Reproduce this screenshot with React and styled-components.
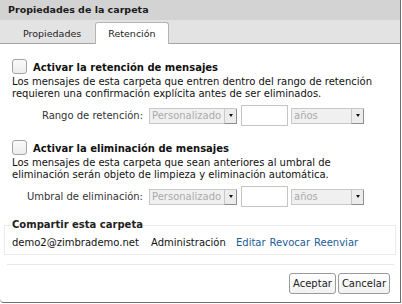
import React from 'react';
import styled, { createGlobalStyle } from 'styled-components';

const GlobalStyle = createGlobalStyle`
  html, body {
    margin: 0;
    padding: 0;
    background: #fff;
  }
  body {
    font-family: "DejaVu Sans", Verdana, sans-serif;
    font-size: 10px;
    color: #111;
  }
`;

const Dialog = styled.div`
  width: 400px;
  height: 302px;
  display: flex;
  flex-direction: column;
  background: #fff;
  border-right: 1px solid #6f6f6f;
  border-bottom: 1px solid #6f6f6f;
  border-bottom-left-radius: 4px;
  overflow: hidden;
`;

const TitleBar = styled.div`
  height: 20px;
  background: #d3d3d3;
  padding: 0 0 2px 8px;
  box-sizing: border-box;
  display: flex;
  align-items: center;
  font-weight: bold;
  font-size: 9.5px;
  color: #1a1a1a;
`;

const TabBar = styled.div`
  height: 23px;
  background: #e3e3e3;
  border-bottom: 1px solid #a4a4a4;
  display: flex;
  align-items: flex-end;
  padding-left: 10px;
`;

const Tab = styled.div`
  box-sizing: border-box;
  padding: 0 12px;
  display: flex;
  align-items: center;
  font-size: 9.5px;
  color: #222;
  background: ${({ $active }) => ($active ? '#fff' : 'transparent')};
  border: 1px solid ${({ $active }) => ($active ? '#b4b4b4' : 'transparent')};
  border-bottom: none;
  border-radius: 3px 3px 0 0;
  margin-bottom: ${({ $active }) => ($active ? '-1px' : '0')};
  margin-left: ${({ $active }) => ($active ? '1px' : '0')};
  height: ${({ $active }) => ($active ? '22px' : '21px')};
`;

const Body = styled.div`
  padding: 14px 6px 0 12px;
  display: flex;
  flex-direction: column;
`;

const Section = styled.div`
  display: flex;
  flex-direction: column;
  margin-bottom: ${({ $gap }) => $gap}px;
`;

const CheckRow = styled.label`
  display: flex;
  align-items: center;
  gap: 6px;
  font-weight: bold;
  font-size: 10px;
  height: 16px;
  padding-top: 1px;
`;

const Check = styled.span`
  width: 15px;
  height: 15px;
  margin-top: -1px;
  box-sizing: border-box;
  border: 1px solid #a4a4a4;
  border-radius: 3px;
  background: linear-gradient(#fafafa, #ececec);
`;

const Desc = styled.p`
  margin: 1px 0 0;
  line-height: 12px;
  font-size: 10px;
  color: #111;
`;

const FieldRow = styled.div`
  display: flex;
  align-items: center;
  margin-top: 5px;
  height: 21px;
`;

const FieldLabel = styled.span`
  width: 131px;
  text-align: right;
  color: #333;
  margin-right: 6px;
`;

const Select = styled.div`
  width: ${({ $w }) => $w}px;
  height: 16px;
  display: flex;
  border: 1px solid #c8c8c8;
  border-right: none;
  background: #f0f0f0;
  box-sizing: border-box;
`;

const SelectText = styled.span`
  flex: 1;
  color: #ababab;
  padding-left: 2px;
  display: flex;
  align-items: center;
`;

const SelectArrow = styled.span`
  width: 13px;
  box-sizing: border-box;
  border-left: 1px solid #c8c8c8;
  border-right: 1px solid #8e8e8e;
  border-bottom: 1px solid #8e8e8e;
  margin-bottom: -1px;
  background: #ececec;
  display: flex;
  align-items: center;
  justify-content: center;
  &::after {
    content: '';
    border-left: 2.5px solid transparent;
    border-right: 2.5px solid transparent;
    border-top: 3px solid #111;
  }
`;

const NumInput = styled.div`
  width: 47px;
  height: 21px;
  box-sizing: border-box;
  border: 1px solid #c4c4c4;
  background: #fff;
  margin: 0 3px 0 4px;
`;

const Fieldset = styled.fieldset`
  margin: 0 0 0 -8px;
  width: 392px;
  box-sizing: border-box;
  border: 1px solid #ebebeb;
  padding: 3px 7px 4px 7px;
`;

const Legend = styled.legend`
  font-weight: bold;
  padding: 0;
  font-size: 10px;
  line-height: 12px;
  color: #222;
`;

const ShareRow = styled.div`
  display: flex;
  align-items: center;
  height: 16px;
`;

const Cell = styled.span`
  width: ${({ $w }) => ($w ? `${$w}px` : 'auto')};
  color: #111;
`;

const Link = styled.a`
  color: #1a5c98;
  margin-right: 4px;
  cursor: pointer;
`;

const Footer = styled.div`
  margin: 9px 6px 0 7px;
  border-top: 1px solid #e6e6e6;
  padding: 8px 4px 0 0;
  display: flex;
  justify-content: flex-end;
  gap: 2px;
`;

const Button = styled.button`
  font-family: inherit;
  font-size: 10px;
  height: 21px;
  padding: 0 3px;
  border: 1px solid #9a9a9a;
  border-radius: 3px;
  background: linear-gradient(#fff, #f1f1f1);
  color: #222;
`;

const PolicyBlock = ({ title, lines, label, gap }) => (
  <Section $gap={gap}>
    <CheckRow>
      <Check />
      {title}
    </CheckRow>
    <Desc>
      {lines[0]}
      <br />
      {lines[1]}
    </Desc>
    <FieldRow>
      <FieldLabel>{label}</FieldLabel>
      <Select $w={88}>
        <SelectText>Personalizado</SelectText>
        <SelectArrow />
      </Select>
      <NumInput />
      <Select $w={73}>
        <SelectText>años</SelectText>
        <SelectArrow />
      </Select>
    </FieldRow>
  </Section>
);

const App = () => (
  <>
    <GlobalStyle />
    <Dialog>
      <TitleBar>Propiedades de la carpeta</TitleBar>
      <TabBar>
        <Tab>Propiedades</Tab>
        <Tab $active>Retención</Tab>
      </TabBar>
      <Body>
        <PolicyBlock
          title="Activar la retención de mensajes"
          lines={[
            'Los mensajes de esta carpeta que entren dentro del rango de retención',
            'requieren una confirmación explícita antes de ser eliminados.',
          ]}
          label="Rango de retención:"
          gap={13}
        />
        <PolicyBlock
          title="Activar la eliminación de mensajes"
          lines={[
            'Los mensajes de esta carpeta que sean anteriores al umbral de',
            'eliminación serán objeto de limpieza y eliminación automática.',
          ]}
          label="Umbral de eliminación:"
          gap={12}
        />
        <Fieldset>
          <Legend>Compartir esta carpeta</Legend>
          <ShareRow>
            <Cell $w={139}>demo2@zimbrademo.net</Cell>
            <Cell $w={85}>Administración</Cell>
            <Link>Editar</Link>
            <Link>Revocar</Link>
            <Link>Reenviar</Link>
          </ShareRow>
        </Fieldset>
      </Body>
      <Footer>
        <Button>Aceptar</Button>
        <Button>Cancelar</Button>
      </Footer>
    </Dialog>
  </>
);

export default App;
